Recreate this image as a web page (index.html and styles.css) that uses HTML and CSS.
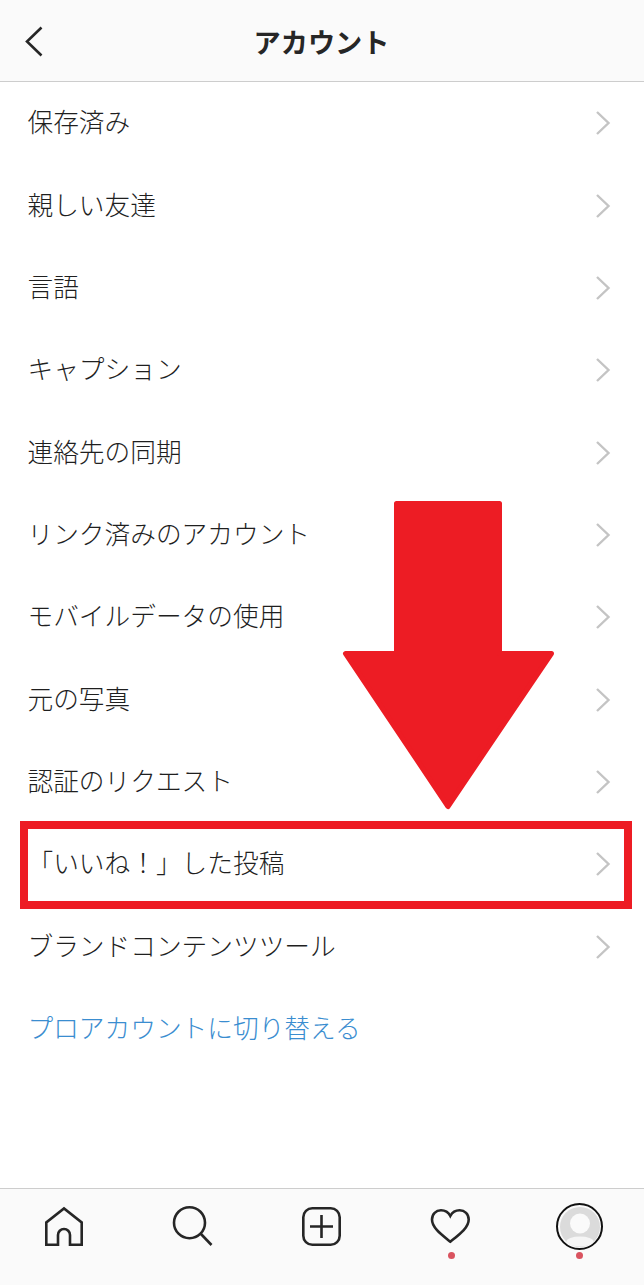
FILE: index.html
```html
<!DOCTYPE html>
<html lang="ja">
<head>
    <title>アカウント</title>
    <link rel="stylesheet" href="styles.css">
</head>
<body>
    <div class="screen">
        <header class="top-bar">
            <svg class="back-icon" width="20" height="32" viewBox="0 0 20 32">
                <path d="M17.5 1.5 L3 15.5 L17.5 29.5" />
            </svg>
            <h1>アカウント</h1>
        </header>

        <ul class="menu">
            <li class="menu-item">保存済み<svg class="chevron" width="16" height="26" viewBox="0 0 16 26"><path d="M2 2 L13.5 13 L2 24" /></svg></li>
            <li class="menu-item">親しい友達<svg class="chevron" width="16" height="26" viewBox="0 0 16 26"><path d="M2 2 L13.5 13 L2 24" /></svg></li>
            <li class="menu-item">言語<svg class="chevron" width="16" height="26" viewBox="0 0 16 26"><path d="M2 2 L13.5 13 L2 24" /></svg></li>
            <li class="menu-item">キャプション<svg class="chevron" width="16" height="26" viewBox="0 0 16 26"><path d="M2 2 L13.5 13 L2 24" /></svg></li>
            <li class="menu-item">連絡先の同期<svg class="chevron" width="16" height="26" viewBox="0 0 16 26"><path d="M2 2 L13.5 13 L2 24" /></svg></li>
            <li class="menu-item">リンク済みのアカウント<svg class="chevron" width="16" height="26" viewBox="0 0 16 26"><path d="M2 2 L13.5 13 L2 24" /></svg></li>
            <li class="menu-item">モバイルデータの使用<svg class="chevron" width="16" height="26" viewBox="0 0 16 26"><path d="M2 2 L13.5 13 L2 24" /></svg></li>
            <li class="menu-item">元の写真<svg class="chevron" width="16" height="26" viewBox="0 0 16 26"><path d="M2 2 L13.5 13 L2 24" /></svg></li>
            <li class="menu-item">認証のリクエスト<svg class="chevron" width="16" height="26" viewBox="0 0 16 26"><path d="M2 2 L13.5 13 L2 24" /></svg></li>
            <li class="menu-item menu-item-marked">「いいね！」した投稿<svg class="chevron" width="16" height="26" viewBox="0 0 16 26"><path d="M2 2 L13.5 13 L2 24" /></svg></li>
            <li class="menu-item">ブランドコンテンツツール<svg class="chevron" width="16" height="26" viewBox="0 0 16 26"><path d="M2 2 L13.5 13 L2 24" /></svg></li>
            <li class="menu-item menu-link">プロアカウントに切り替える</li>
        </ul>

        <nav class="tab-bar">
            <svg class="tab-icon" width="44" height="44" viewBox="0 0 44 44">
                <path d="M4.3 39.7 V17.5 L22 3.5 L39.7 17.5 V39.7 H28 V30 A6 6 0 0 0 16 30 V39.7 Z" />
            </svg>
            <svg class="tab-icon" width="44" height="44" viewBox="0 0 44 44">
                <circle cx="18.5" cy="17.7" r="15.5" />
                <path d="M29.5 28.5 L40.5 40" />
            </svg>
            <svg class="tab-icon" width="44" height="44" viewBox="0 0 44 44">
                <rect x="3.3" y="3.3" width="36.4" height="36.4" rx="9" />
                <path d="M21.5 10 V33 M10 21.5 H33" />
            </svg>
            <div class="tab-with-dot">
                <svg class="tab-icon" width="44" height="44" viewBox="0 0 44 44">
                    <path d="M21.3 36.7 C13 30 3 23 3 14.5 C3 9 7 5.3 12 5.3 C15.7 5.3 19.3 7.3 21.3 11 C23.3 7.3 26.9 5.3 30.6 5.3 C35.7 5.3 39.7 9 39.7 14.5 C39.7 23 29.6 30 21.3 36.7 Z" />
                </svg>
                <span class="dot"></span>
            </div>
            <div class="tab-with-dot tab-profile">
                <div class="avatar">
                    <svg width="40" height="40" viewBox="0 0 40 40">
                        <circle cx="20" cy="20" r="20" fill="#dbdbdb" />
                        <circle cx="20" cy="16.5" r="10" fill="#fafafa" />
                        <ellipse cx="20" cy="34.5" rx="13.5" ry="5" fill="#f5f5f5" />
                    </svg>
                </div>
                <span class="dot"></span>
            </div>
        </nav>

        <svg class="big-arrow" width="213" height="312" viewBox="0 0 213 312">
            <path d="M54.5 3.5 H157.5 V153.5 H209.5 L106 306.5 L3.5 153.5 H54.5 Z" />
        </svg>
    </div>
</body>
</html>
```

FILE: styles.css
```css
* {
    box-sizing: border-box;
}

body {
    margin: 0;
    background-color: #fff;
    font-family: "Noto Sans CJK JP", "Noto Sans", sans-serif;
    color: #1f1f1f;
}

.screen {
    position: relative;
    display: flex;
    flex-direction: column;
    height: 1285px;
    overflow: hidden;
}

.top-bar {
    position: relative;
    display: flex;
    align-items: center;
    justify-content: center;
    height: 82px;
    flex-shrink: 0;
    padding-top: 3px;
    padding-right: 1px;
    background-color: #fafafa;
    border-bottom: 1px solid #cdcdcd;
}

.top-bar h1 {
    margin: 0;
    font-size: 27.2px;
    font-weight: 700;
    line-height: 1;
    color: #262626;
}

.back-icon {
    position: absolute;
    left: 24px;
    top: 26px;
}

.back-icon path {
    fill: none;
    stroke: #262626;
    stroke-width: 2.6;
}

.menu {
    flex: 1;
    margin: 0;
    padding: 0;
    list-style: none;
}

.menu-item {
    display: flex;
    align-items: center;
    justify-content: space-between;
    height: 82.36px;
    padding: 0 33px 5px 27.5px;
    font-size: 25.7px;
    font-weight: 300;
}

.menu-item-marked {
    position: relative;
}

/* red box drawn over the row */
.menu-item-marked::after {
    content: "";
    position: absolute;
    left: 20px;
    right: 12px;
    top: -2.2px;
    bottom: -3.4px;
    border: 8px solid #ed1c24;
}

.menu-link {
    color: #3a8dd0;
}

.chevron {
    margin-top: 5px;
}

.chevron path {
    fill: none;
    stroke: #c4c4c4;
    stroke-width: 2.4;
}

.tab-bar {
    display: flex;
    gap: 85px;
    align-items: flex-start;
    height: 97px;
    flex-shrink: 0;
    padding: 16px 0 0 42px;
    background-color: #fafafa;
    border-top: 1px solid #cdcdcd;
}

.tab-icon {
    display: block;
}

.tab-icon path,
.tab-icon circle,
.tab-icon rect {
    fill: none;
    stroke: #262626;
    stroke-width: 2.6;
}

.tab-with-dot {
    position: relative;
    display: flex;
    flex-direction: column;
    align-items: center;
}

.tab-profile {
    margin-left: -2px;
}

.dot {
    position: absolute;
    top: 46.5px;
    width: 7px;
    height: 7px;
    border-radius: 50%;
    background-color: #d9535f;
}

.avatar {
    display: flex;
    align-items: center;
    justify-content: center;
    width: 47px;
    height: 47px;
    margin-top: -2px;
    border: 2px solid #111;
    border-radius: 50%;
    background-color: #fafafa;
}

.big-arrow {
    position: absolute;
    left: 342px;
    top: 500px;
}

.big-arrow path {
    fill: #ed1c24;
    stroke: #ed1c24;
    stroke-width: 5;
    stroke-linejoin: round;
}
```
